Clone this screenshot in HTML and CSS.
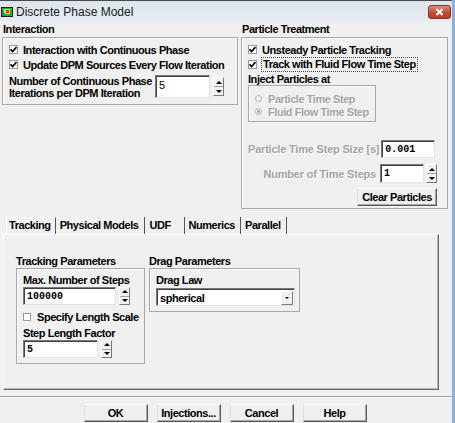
FILE: index.html
```html
<html>
<head>
<link rel="stylesheet" href="styles.css">
</head>
<body>
<div class="window">

<div class="titlebar">
	<svg class="app-icon" width="12" height="10" viewBox="0 0 12 10">
		<rect x="0" y="0" width="12" height="10" fill="#1a1a1a"/>
		<rect x="1" y="1" width="10" height="8" fill="#1fb53a"/>
		<rect x="3" y="2" width="6" height="5" fill="#e8e020"/>
		<rect x="5" y="3" width="3" height="3" fill="#e23a1a"/>
		<rect x="1" y="6" width="3" height="3" fill="#1a7adf"/>
	</svg>
	<span class="title">Discrete Phase Model</span>
	<div class="close-btn">
		<svg width="9" height="8" viewBox="0 0 9 8"><path d="M1.5 1 L7.5 7 M7.5 1 L1.5 7" stroke="#fff" stroke-width="2"/></svg>
	</div>
</div>

<div class="top">
	<div class="section interaction">
		<div class="caption">Interaction</div>
		<div class="frame">
			<div class="check-row"><span class="box"><svg width="7" height="7" viewBox="0 0 7 7"><path d="M0.5 3.3 L2.6 5.5 L6.5 1" stroke="#000" stroke-width="1.6" fill="none"/></svg></span>Interaction with Continuous Phase</div>
			<div class="check-row"><span class="box"><svg width="7" height="7" viewBox="0 0 7 7"><path d="M0.5 3.3 L2.6 5.5 L6.5 1" stroke="#000" stroke-width="1.6" fill="none"/></svg></span>Update DPM Sources Every Flow Iteration</div>
			<div class="iter-row">
				<div class="iter-label">Number of Continuous Phase<br>Iterations per DPM Iteration</div>
				<div class="input iter-input">5</div>
				<div class="spin iter-spin"><span class="spin-up"></span><span class="spin-down"></span></div>
			</div>
		</div>
	</div>

	<div class="section particle">
		<div class="caption">Particle Treatment</div>
		<div class="frame particle-frame">
			<div class="check-row"><span class="box"><svg width="7" height="7" viewBox="0 0 7 7"><path d="M0.5 3.3 L2.6 5.5 L6.5 1" stroke="#000" stroke-width="1.6" fill="none"/></svg></span>Unsteady Particle Tracking</div>
			<div class="check-row"><span class="box"><svg width="7" height="7" viewBox="0 0 7 7"><path d="M0.5 3.3 L2.6 5.5 L6.5 1" stroke="#000" stroke-width="1.6" fill="none"/></svg></span><span class="focus">Track with Fluid Flow Time Step</span></div>
			<div class="sub-caption">Inject Particles at</div>
			<div class="frame radio-frame">
				<div class="radio-row disabled"><span class="radio"></span>Particle Time Step</div>
				<div class="radio-row disabled"><span class="radio on"></span>Fluid Flow Time Step</div>
			</div>
			<div class="param-row step-size">
				<span class="param-label disabled">Particle Time Step Size [s]</span>
				<div class="input mono size-input">0.001</div>
			</div>
			<div class="param-row step-count">
				<span class="param-label disabled">Number of Time Steps</span>
				<div class="input mono count-input">1</div>
				<div class="spin count-spin"><span class="spin-up"></span><span class="spin-down"></span></div>
			</div>
			<div class="param-row">
				<div class="btn clear-btn">Clear Particles</div>
			</div>
		</div>
	</div>
</div>

<div class="tabs">
	<div class="tab active">Tracking</div>
	<div class="tab">Physical Models</div>
	<div class="tab tab-udf">UDF</div>
	<div class="tab">Numerics</div>
	<div class="tab">Parallel</div>
</div>

<div class="panel">
	<div class="section tracking">
		<div class="caption">Tracking Parameters</div>
		<div class="frame tracking-frame">
			<div class="field-caption">Max. Number of Steps</div>
			<div class="field-row">
				<div class="input mono steps-input">100000</div>
				<div class="spin"><span class="spin-up"></span><span class="spin-down"></span></div>
			</div>
			<div class="check-row length-row"><span class="box"></span>Specify Length Scale</div>
			<div class="field-caption">Step Length Factor</div>
			<div class="field-row">
				<div class="input mono factor-input">5</div>
				<div class="spin"><span class="spin-up"></span><span class="spin-down"></span></div>
			</div>
		</div>
	</div>
	<div class="section drag">
		<div class="caption">Drag Parameters</div>
		<div class="frame drag-frame">
			<div class="field-caption">Drag Law</div>
			<div class="dropdown">
				<span class="dropdown-value">spherical</span>
				<span class="dropdown-arrow"></span>
			</div>
		</div>
	</div>
</div>

<div class="separator"></div>

<div class="buttons">
	<div class="btn">OK</div>
	<div class="btn">Injections...</div>
	<div class="btn">Cancel</div>
	<div class="btn">Help</div>
</div>

</div>
</body>
</html>
```

FILE: styles.css
```css
* {
	box-sizing: border-box;
}

body {
	margin: 0;
	background: #f0f0f0;
	font: bold 11px "Liberation Sans", Arial, sans-serif;
	letter-spacing: -0.45px;
	color: #000;
}

.window {
	width: 455px;
	height: 423px;
	background: #f0f0f0;
	border-right: 3px solid #86b2da;
	overflow: hidden;
}

/* title bar */

.titlebar {
	height: 22px;
	display: flex;
	align-items: center;
	background: linear-gradient(#dce4ed, #e6ecf2);
	border-top: 1px solid #4a4a4a;
	padding-left: 1px;
}

.app-icon {
	margin-top: 1px;
}

.title {
	margin-left: 3px;
	font: normal 12px "Liberation Sans", Arial, sans-serif;
	letter-spacing: 0;
	color: #1a1a1a;
}

.close-btn {
	margin-left: auto;
	margin-right: 1px;
	width: 23px;
	height: 14px;
	border: 1px solid #8a3225;
	border-radius: 3px;
	background: linear-gradient(#dd8a78, #c8503c 50%, #b83a26);
	display: flex;
	align-items: center;
	justify-content: center;
}

/* group boxes */

.top {
	display: flex;
	align-items: flex-start;
	padding-left: 2px;
}

.caption {
	height: 15px;
	line-height: 15px;
	padding-left: 1px;
	white-space: nowrap;
}

.frame {
	border: 1px solid #a8a8a8;
	box-shadow: inset 1px 1px 0 #fff;
}

.interaction {
	width: 236px;
}

.interaction .frame {
	height: 68px;
	padding: 4px 0 0 6px;
}

.particle {
	width: 207px;
	margin-left: 3px;
}

.particle-frame {
	height: 172px;
	padding: 4px 10px 0 6px;
}

.check-row {
	display: flex;
	align-items: center;
	height: 15px;
	white-space: nowrap;
}

.box {
	width: 9px;
	height: 9px;
	border: 1px solid #9a9a9a;
	background: #fff;
	margin-right: 5px;
	display: flex;
	align-items: center;
	justify-content: center;
	flex: none;
}

.focus {
	outline: 1px dotted #444;
	outline-offset: 0;
	padding: 0 1px;
	line-height: 13px;
}

.iter-row {
	display: flex;
	align-items: flex-start;
	margin-top: 3px;
}

.iter-label {
	width: 146px;
	line-height: 12px;
	white-space: nowrap;
}

.iter-input {
	width: 55px;
	height: 23px;
}

.iter-spin {
	margin: 2px 0 0 3px;
	height: 19px;
}

.sub-caption {
	height: 12px;
	line-height: 12px;
	margin-top: 1px;
}

.radio-frame {
	width: 128px;
	height: 37px;
	margin-top: 0;
	padding: 6px 0 0 6px;
}

.radio-row {
	display: flex;
	align-items: center;
	height: 13px;
	white-space: nowrap;
}

.radio {
	width: 7px;
	height: 7px;
	border: 1px solid #b0b0b0;
	border-radius: 50%;
	background: #f4f4f4;
	margin-right: 6px;
	display: flex;
	align-items: center;
	justify-content: center;
}

.radio.on::after {
	content: "";
	width: 3px;
	height: 3px;
	border-radius: 50%;
	background: #a0a0a0;
}

.disabled {
	color: #a3a3a3;
	text-shadow: 1px 1px 0 #fff;
}

.param-row {
	display: flex;
	align-items: center;
	justify-content: flex-end;
}

.param-label {
	flex: 1;
	text-align: right;
	white-space: nowrap;
	letter-spacing: -0.2px;
}

.step-size {
	margin-top: 18px;
}

.step-size .param-label {
	margin-right: 2px;
}

.size-input {
	width: 56px;
	height: 18px;
	margin-right: 2px;
}

.step-count {
	margin-top: 6px;
}

.step-count .param-label {
	margin-right: 4px;
}

.count-input {
	width: 44px;
	height: 19px;
}

.count-spin {
	margin-left: 2px;
	height: 19px;
	width: 13px;
}

.clear-btn {
	margin-top: 5px;
	width: 80px;
}

/* inputs */

.input {
	background: #fff;
	border: 1px solid;
	border-color: #7a7a7a #e4e4e4 #e4e4e4 #7a7a7a;
	box-shadow: inset 1px 1px 0 #404040;
	padding: 3px 0 0 3px;
	line-height: 12px;
	font-weight: normal;
}

.mono {
	font: bold 10px "Liberation Mono", "Courier New", monospace;
	letter-spacing: 0;
	padding-top: 3px;
}

.spin {
	width: 11px;
	display: flex;
	flex-direction: column;
	border: 1px solid;
	border-color: #fff #7a7a7a #7a7a7a #fff;
	background: #f0f0f0;
}

.spin span {
	flex: 1;
	display: flex;
	align-items: center;
	justify-content: center;
}

.spin-down {
	border-top: 1px solid #a0a0a0;
}

.spin-up::after {
	content: "";
	border: 3px solid transparent;
	border-bottom: 3px solid #000;
	border-top: 0;
}

.spin-down::after {
	content: "";
	border: 3px solid transparent;
	border-top: 3px solid #000;
	border-bottom: 0;
}

.btn {
	height: 18px;
	border: 1px solid;
	border-color: #fff #5a5a5a #5a5a5a #e0e0e0;
	box-shadow: inset -1px -1px 0 #a8a8a8;
	background: #f0f0f0;
	display: flex;
	align-items: center;
	justify-content: center;
	white-space: nowrap;
}

/* tabs */

.tabs {
	display: flex;
	margin: 8px 0 0 6px;
	height: 17px;
}

.tab {
	padding: 0 5px 0 4px;
	line-height: 16px;
	border-right: 1px solid #555;
}

.tab.active {
	padding: 0 4px 0 2px;
	border-left: 1px solid #fff;
	border-top: 1px solid #fff;
	line-height: 15px;
}

.tab-udf {
	width: 40px;
	padding-left: 5px;
}

.panel {
	margin-left: 3px;
	width: 436px;
	height: 156px;
	border: 1px solid;
	border-color: #fff #6a6a6a #6a6a6a #fff;
	box-shadow: inset -1px -1px 0 #b8b8b8;
	display: flex;
	align-items: flex-start;
	padding: 19px 0 0 12px;
}

.panel .caption {
	height: 14px;
	line-height: 14px;
	padding-left: 0;
}

.tracking {
	width: 129px;
}

.tracking-frame {
	height: 96px;
	padding: 5px 6px 0 6px;
}

.drag {
	width: 151px;
	margin-left: 4px;
}

.drag-frame {
	height: 44px;
	padding: 5px 4px 0 6px;
}

.field-caption {
	height: 12px;
	line-height: 12px;
	white-space: nowrap;
}

.field-row {
	display: flex;
	margin-top: 1px;
	height: 18px;
}

.steps-input {
	width: 93px;
}

.factor-input {
	width: 75px;
}

.field-row .spin {
	margin-left: 3px;
}

.length-row {
	margin-top: 4px;
	margin-bottom: 3px;
}

.length-row .box {
	width: 8px;
	height: 8px;
	margin-right: 6px;
}

.dropdown {
	margin-top: 2px;
	width: 139px;
	height: 18px;
	background: #fff;
	border: 1px solid;
	border-color: #7a7a7a #e4e4e4 #e4e4e4 #7a7a7a;
	box-shadow: inset 1px 1px 0 #404040;
	display: flex;
	align-items: center;
	padding: 1px 1px 0 3px;
}

.dropdown-value {
	flex: 1;
}

.dropdown-arrow {
	width: 12px;
	height: 14px;
	border: 1px solid;
	border-color: #fff #7a7a7a #7a7a7a #fff;
	background: #f0f0f0;
	display: flex;
	align-items: center;
	justify-content: center;
}

.dropdown-arrow::after {
	content: "";
	border: 2px solid transparent;
	border-top: 2px solid #000;
	border-bottom: 0;
}

/* bottom */

.separator {
	margin-top: 6px;
	height: 2px;
	border-top: 1px solid #a0a0a0;
	border-bottom: 1px solid #fff;
}

.buttons {
	display: flex;
	justify-content: center;
	gap: 9px;
	margin-top: 6px;
	padding-right: 2px;
}

.buttons .btn {
	width: 64px;
}
```
